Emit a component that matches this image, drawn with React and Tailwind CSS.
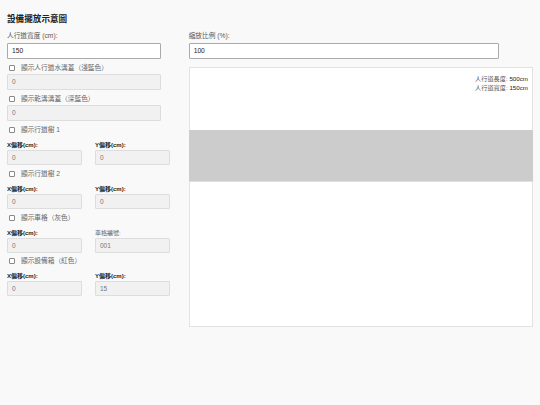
import React from 'react';

const FONT = { fontFamily: '"Liberation Sans", "Noto Sans CJK TC", Arial, sans-serif' };

function CheckRow({ label, className = '' }) {
  return (
    <label className={`flex items-center h-[10px] pl-[2px] text-[6.7px] text-[#666] ${className}`}>
      <span className="w-[6px] h-[6px] border border-[#888] rounded-[1px] bg-white mr-[6px]" />
      <span>{label}</span>
    </label>
  );
}

function DisabledInput({ value, className = '' }) {
  return (
    <div className={`h-[16px] border border-[#ddd] bg-[#f1f1f1] rounded-[1px] flex items-center px-[4px] text-[6.5px] text-[#777] ${className}`}>
      {value}
    </div>
  );
}

function PairRow({ left, right, className = '' }) {
  return (
    <div className={`flex gap-[13px] ${className}`}>
      {[left, right].map((f) => (
        <div key={f.label} className="w-[75px] flex flex-col">
          <span className={`h-[8px] leading-[8px] text-[6px] ${f.dim ? 'text-[#666]' : 'text-[#222] font-semibold'}`}>{f.label}</span>
          <div className="mt-[1px] h-[15px] border border-[#ddd] bg-[#f1f1f1] rounded-[1px] flex items-center px-[4px] text-[6.5px] text-[#777]">
            {f.value}
          </div>
        </div>
      ))}
    </div>
  );
}

export default function App() {
  return (
    <div className="w-[540px] h-[405px] bg-[#f9f9f9] px-[7px] pt-[14px]" style={FONT}>
      <h1 className="text-[8.6px] leading-[10px] font-bold text-[#222]">設備擺放示意圖</h1>

      <div className="flex gap-[18px] mt-[8px]">
        {/* controls */}
        <div className="w-[164px] flex flex-col">
          <span className="h-[8px] leading-[8px] text-[6.7px] text-[#555]">人行道寬度 (cm):</span>
          <div className="mt-[3px] w-[154px] h-[16px] border border-[#aaa] bg-white rounded-[1px] flex items-center px-[4px] text-[6.7px] text-[#222]">150</div>

          <CheckRow label="顯示人行道水溝蓋（淺藍色）" className="mt-[4px]" />
          <DisabledInput value="0" className="mt-[1px] w-[154px]" />

          <CheckRow label="顯示乾溝溝蓋（深藍色）" className="mt-[4px]" />
          <DisabledInput value="0" className="mt-[1px] w-[154px]" />

          <CheckRow label="顯示行道樹 1" className="mt-[4px]" />
          <PairRow className="mt-[6px]" left={{ label: 'X偏移(cm):', value: '0' }} right={{ label: 'Y偏移(cm):', value: '0' }} />

          <CheckRow label="顯示行道樹 2" className="mt-[4px]" />
          <PairRow className="mt-[6px]" left={{ label: 'X偏移(cm):', value: '0' }} right={{ label: 'Y偏移(cm):', value: '0' }} />

          <CheckRow label="顯示車格（灰色）" className="mt-[4px]" />
          <PairRow className="mt-[6px]" left={{ label: 'X偏移(cm):', value: '0' }} right={{ label: '車格編號:', value: '001', dim: true }} />

          <CheckRow label="顯示設備箱（紅色）" className="mt-[3px]" />
          <PairRow className="mt-[6px]" left={{ label: 'X偏移(cm):', value: '0' }} right={{ label: 'Y偏移(cm):', value: '15' }} />
        </div>

        {/* preview */}
        <div className="w-[345px] flex flex-col">
          <span className="h-[8px] leading-[8px] text-[6.7px] text-[#555]">縮放比例 (%):</span>
          <div className="mt-[3px] w-[310px] h-[16px] border border-[#aaa] bg-white rounded-[1px] flex items-center px-[4px] text-[6.7px] text-[#222]">100</div>

          <div className="relative mt-[8px] h-[260px] border border-[#e2e2e2] bg-white">
            <div className="absolute right-[4px] top-[7px] text-right text-[6.2px] leading-[8.5px] text-[#555]">
              <div>人行道長度: <span className="text-[#222]">500cm</span></div>
              <div>人行道寬度: <span className="text-[#222]">150cm</span></div>
            </div>
            <div className="absolute left-[-1px] right-[-1px] top-[62px] h-[52px] bg-[#cccccc] border-b border-[#e0e0e0]" />
          </div>
        </div>
      </div>
    </div>
  );
}
